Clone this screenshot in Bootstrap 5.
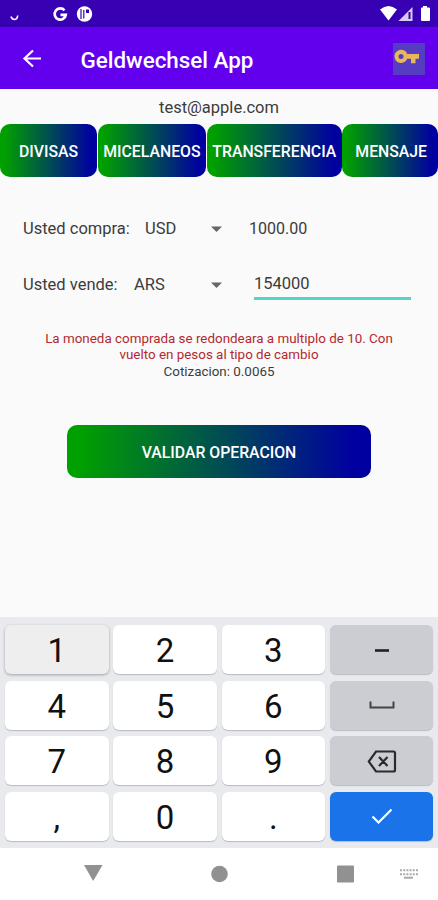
<!DOCTYPE html>
<html lang="es">
<head>
<meta charset="utf-8">
<meta name="viewport" content="width=device-width, initial-scale=1">
<title>Geldwechsel App</title>
<link href="https://cdn.jsdelivr.net/npm/bootstrap@5.3.0/dist/css/bootstrap.min.css" rel="stylesheet">
<style>
body{font-family:Roboto,"Liberation Sans",sans-serif;background:#fafafa;color:#3c3c3c;height:900px;overflow:hidden}
svg{display:block;flex:none}
.status-bar{height:27px;background:#3800b3;padding:0 7px 0 8px}
.app-bar{height:62px;background:#6200ee;padding:2px 13px 0 20px}
.app-title{font-size:22.4px;font-weight:500;line-height:30px;margin-left:35.5px;padding-top:1px}
.key-box{width:32px;height:32px;background:#553cc0}
.email{font-size:16.5px;line-height:20px;height:35px;padding-top:9px}
.grad,.grad:hover{background:linear-gradient(90deg,#00a000 4%,#0000a0 94%);color:#fff;border:0;border-radius:10px;font-size:15.8px;font-weight:500;line-height:20px;padding:2px 0 0;white-space:nowrap}
.tabs-row{display:grid;grid-template-columns:97px 108.5px 135px 95.5px;column-gap:.67px;height:53px}
.tabs-row .grad:last-child{padding-left:2px}
.field-row{height:56px;padding-left:23px;font-size:16.5px;line-height:20px}
.code{width:65px}
.amount{font-size:16px;margin-left:26px}
.amount-line{width:157px;height:29px;padding-top:3px;border-bottom:3px solid #50d5c8;margin-left:31px}
.note{font-size:13.4px;line-height:16px;color:#b3292f;padding-top:2px}
.rate{font-size:13.4px;line-height:18px}
.btn-main{width:304px;height:53px;margin-top:44px}
.keypad{display:grid;grid-template-columns:repeat(4,103.5px);grid-auto-rows:49px;gap:6.5px 4.8px;height:231px;padding:8px 0 0 5px;background:#e8eaed}
.pad-key{background:#fff;border:0;border-radius:6px;box-shadow:0 1px 1px #b9bcc1;color:#111;font-size:33px;line-height:40px;padding:3px 0 0}
.pressed{background:#eee;box-shadow:0 1px 3px #a0a3a8}
.fn{background:#cccdd3;padding:0}
.ok{background:#1a73e8;padding:0}
.nav-bar{height:52px;background:#fff}
</style>
</head>
<body class="d-flex flex-column">
<header class="text-white">
<div class="status-bar d-flex align-items-center">
<svg width="90" height="27" viewBox="0 0 90 27" fill="none" stroke="#fff"><path d="M3 16.500q1 3 3.500 3q2.700 0 3.200-4" stroke-width="1.600"/><path d="M56.500 10.400a5.600 5.600 0 1 0 1.300 4.400h-5.300" stroke-width="2.700"/><circle cx="76.500" cy="14" r="7.700" fill="#fff" stroke="none"/><path d="M73 9v10M75.800 10v8.500" stroke="#3800b3" stroke-width="1.200"/><path d="M78 9.500h3v3.500h-3z" fill="#3800b3" stroke="none"/></svg>
<svg class="ms-auto" width="52" height="27" viewBox="0 0 52 27" fill="#fff"><path d="M1 9.500Q9.500 2.500 18 9.500L9.500 20.500z"/><path d="M19.500 21L33.500 7v14z" opacity=".8"/><path d="M29.500 12h2v7h-2z" fill="#3800b3"/><path d="M44 6h4v1.500h2a1 1 0 0 1 1 1V20a1 1 0 0 1-1 1h-7a1 1 0 0 1-1-1V8.500a1 1 0 0 1 1-1h1z"/></svg>
</div>
<div class="app-bar d-flex align-items-center">
<svg width="25" height="24" viewBox="0 0 25 24" fill="none" stroke="#fff" stroke-width="2.200"><path d="M21 11.500H4.500M13 3.500L4.500 11.500L13 19.500"/></svg>
<div class="app-title">Geldwechsel App</div>
<div class="key-box ms-auto"><svg width="32" height="32" viewBox="0 0 32 32" fill="#e8b75c"><path fill-rule="evenodd" d="M8 6.800a6.600 6.600 0 1 0 6.200 9H18v4.500h4.500v-4.500H26V11H14.200A6.600 6.600 0 0 0 8 6.800zM8 11a2.500 2.500 0 1 1 0 5a2.500 2.500 0 0 1 0-5z"/></svg></div>
</div>
</header>
<main class="flex-grow-1">
<div class="email text-center">test@apple.com</div>
<div class="tabs-row">
<button class="btn grad">DIVISAS</button><button class="btn grad">MICELANEOS</button><button class="btn grad">TRANSFERENCIA</button><button class="btn grad">MENSAJE</button>
</div>
<form class="pt-4">
<div class="field-row d-flex align-items-center"><span style="width:122px">Usted compra:</span><span class="code">USD</span><svg width="13" height="7" viewBox="0 0 13 7"><path d="M1 .5h11L6.500 6z" fill="#666"/></svg><span class="amount">1000.00</span></div>
<div class="field-row d-flex align-items-center"><span style="width:111px">Usted vende:</span><span style="width:76px">ARS</span><svg width="13" height="7" viewBox="0 0 13 7"><path d="M1 .5h11L6.500 6z" fill="#666"/></svg><span class="amount-line">154000</span></div>
</form>
<div class="text-center mt-3"><div class="note">La moneda comprada se redondeara a multiplo de 10. Con<br>vuelto en pesos al tipo de cambio</div><div class="rate">Cotizacion: 0.0065</div></div>
<div class="text-center"><button class="btn grad btn-main">VALIDAR OPERACION</button></div>
</main>
<section class="keypad">
<button class="pad-key pressed">1</button><button class="pad-key">2</button><button class="pad-key">3</button>
<button class="pad-key fn d-flex align-items-center justify-content-center"><svg width="16" height="6" viewBox="0 0 16 6"><path d="M1 3.500h14" stroke="#222" stroke-width="2.600"/></svg></button>
<button class="pad-key">4</button><button class="pad-key">5</button><button class="pad-key">6</button>
<button class="pad-key fn d-flex align-items-center justify-content-center"><svg width="26" height="10" viewBox="0 0 26 10"><path d="M1.500 1.500v6h23v-6" fill="none" stroke="#444" stroke-width="2"/></svg></button>
<button class="pad-key">7</button><button class="pad-key">8</button><button class="pad-key">9</button>
<button class="pad-key fn d-flex align-items-center justify-content-center"><svg width="30" height="24" viewBox="0 0 30 24" fill="none" stroke="#2b2b2e" stroke-width="2.200"><path d="M9 2.500h17.500q1.500 0 1.500 1.500v17q0 1.500-1.500 1.500H9L1.800 12.500zM12 8l8.500 9M20.500 8L12 17"/></svg></button>
<button class="pad-key">,</button><button class="pad-key">0</button><button class="pad-key">.</button>
<button class="pad-key ok d-flex align-items-center justify-content-center"><svg width="22" height="16" viewBox="0 0 22 16"><path d="M1.500 8.500l6 6L20.500 1.500" fill="none" stroke="#fff" stroke-width="2.200"/></svg></button>
</section>
<nav class="nav-bar"><svg width="438" height="52" viewBox="0 0 438 52" fill="#919191"><path d="M84 17h18.500L93.200 33z"/><circle cx="219.500" cy="26" r="8.300"/><rect x="337" y="17.500" width="17" height="17" rx="1"/><path d="M400 22.200h18M400 26.200h18" stroke="#aaa" stroke-width="2" stroke-dasharray="2 1.200"/><path d="M404 29.700h9" stroke="#aaa" stroke-width="2"/></svg></nav>
<script src="https://cdn.jsdelivr.net/npm/bootstrap@5.3.0/dist/js/bootstrap.bundle.min.js"></script>
</body>
</html>
